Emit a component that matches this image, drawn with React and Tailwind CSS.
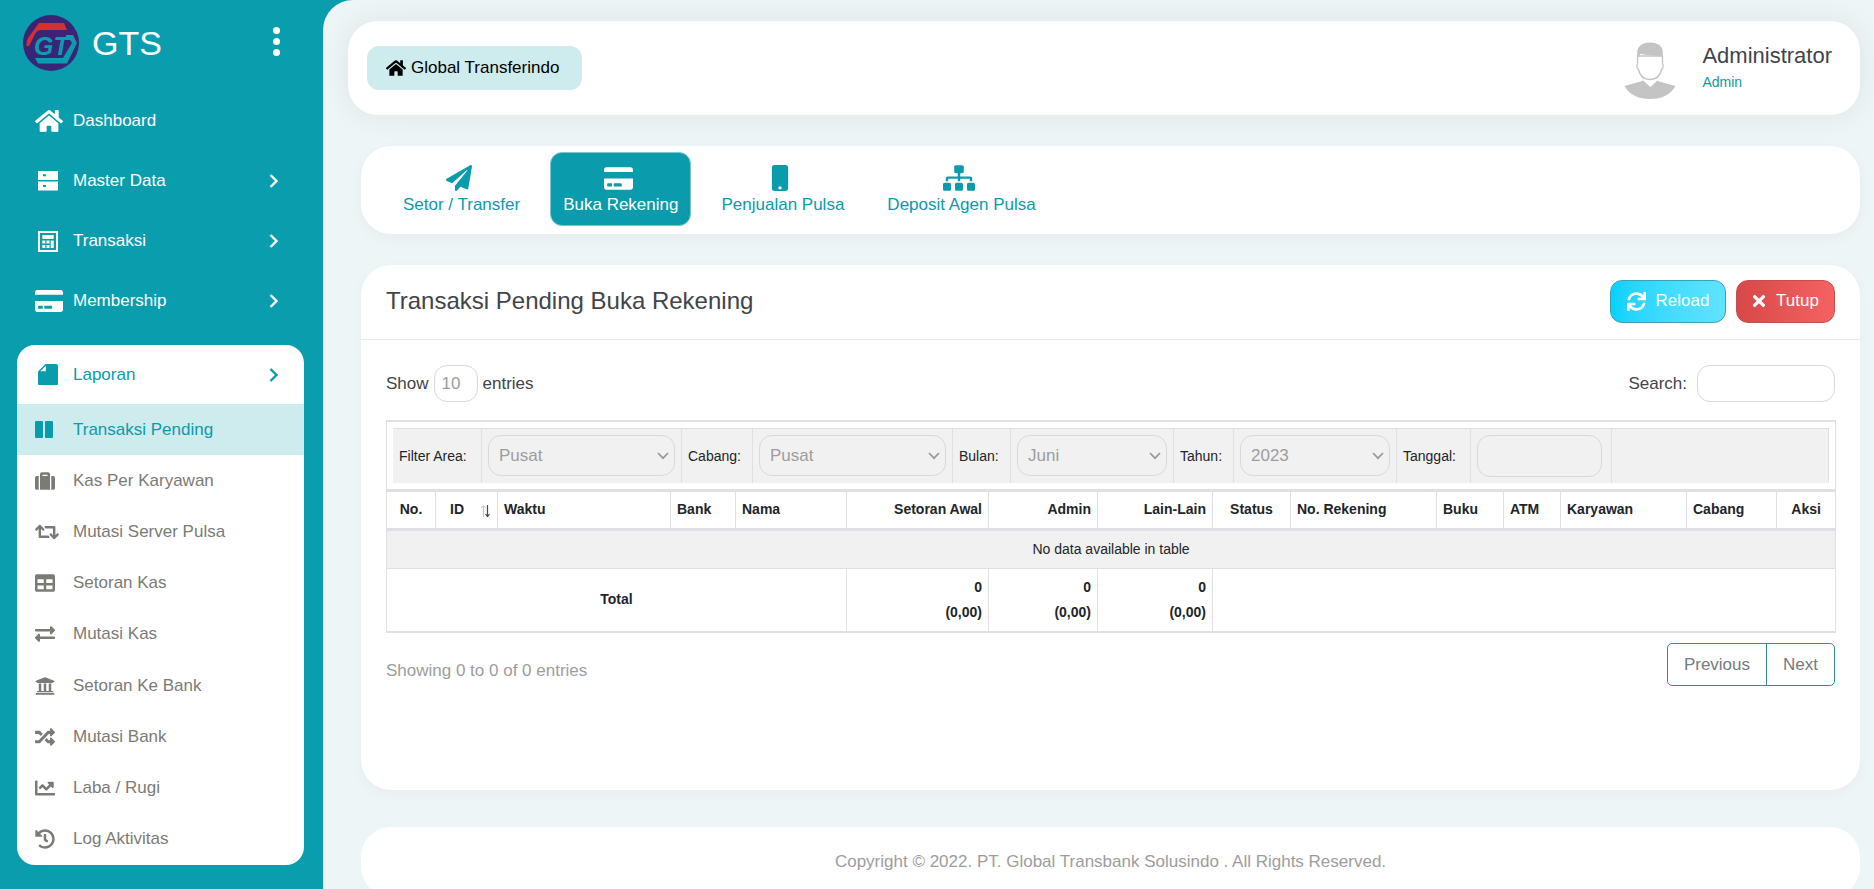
import React from "react";
import {
  FaHome, FaCreditCard, FaSuitcase, FaRetweet, FaTable, FaExchangeAlt, FaUniversity,
  FaRandom, FaChartLine, FaHistory, FaPaperPlane, FaMobile, FaSitemap, FaSync, FaTimes,
} from "react-icons/fa";

function Chevron({ className }) {
  return (
    <svg viewBox="0 0 10 16" className={className} fill="none" stroke="currentColor" strokeWidth="2.4" aria-hidden="true">
      <path d="M1.5 2 L7.5 8 L1.5 14" />
    </svg>
  );
}

function ServerIcon() {
  return (
    <svg viewBox="0 0 20 20" className="h-5 w-5" fill="currentColor" fillRule="evenodd" aria-hidden="true">
      <path d="M0 0H20V9H0Z M5 3.2V5.2H8V3.2Z" />
      <path d="M0 10.6H20V19.6H0Z M5 14V16H8V14Z" />
    </svg>
  );
}

function CalculatorIcon() {
  return (
    <svg viewBox="0 0 20 21" className="h-[21px] w-5" fill="currentColor" fillRule="evenodd" aria-hidden="true">
      <path d="M0 0H20V21H0Z M2 2V19H18V2Z" />
      <path d="M4.3 4H15.7V8H4.3Z" />
      <path d="M4.3 9.6H7.3V12.4H4.3Z M8.5 9.6H11.5V12.4H8.5Z M12.7 9.6H15.7V17H12.7Z M4.3 14H7.3V17H4.3Z M8.5 14H11.5V17H8.5Z" />
    </svg>
  );
}

function FileIcon() {
  return (
    <svg viewBox="0 0 20 21" className="h-[21px] w-5" fill="currentColor" aria-hidden="true">
      <path fillRule="evenodd" d="M7.5 0H18Q20 0 20 2V20Q20 21 19 21H1Q0 21 0 20V7.5Z M2.3 7.2H7.8V1.8Z" />
    </svg>
  );
}

function PauseIcon() {
  return (
    <svg viewBox="0 0 18 17" className="h-[17px] w-[18px]" fill="currentColor" aria-hidden="true">
      <rect x="0" y="0" width="8" height="17" rx="1" />
      <rect x="10" y="0" width="8" height="17" rx="1" />
    </svg>
  );
}

function Logo() {
  return (
    <svg viewBox="0 0 56 56" className="h-14 w-14" role="img" aria-label="GTS">
      <circle cx="28" cy="28" r="28" fill="#3a2477" />
      <path d="M16 8H41L44 15H19Q14 15 12 19L6 31H3.500Q3 27 5 23Z" fill="#d1322f" />
      <path d="M43 20H50L54 28L44 48.500H15L12 43H40L49 28L46 23H43Z" fill="#0a9dae" />
      <text x="11" y="40" fontFamily="Liberation Sans, sans-serif" fontWeight="bold" fontStyle="italic" fontSize="25" fill="#0a9dae">GT</text>
    </svg>
  );
}

function Avatar() {
  return (
    <svg viewBox="0 0 52 58" className="h-[58px] w-[52px]" role="img" aria-label="Administrator">
      <path d="M18.5 34V39L0.5 44Q8 57 26 57Q44 57 51.5 44L33.5 39V34Z" fill="#c4c4c4" />
      <path d="M18.5 33V38L26.500 45L34 38V33Z" fill="#fff" />
      <path d="M13.5 14V22Q12.500 22.500 13 25Q13.500 27 14.500 27.500Q16.500 37.500 26 37.500Q35.500 37.500 37.500 27.500Q38.500 27 39 25Q39.500 22.500 38.500 22V14Z" fill="#fff" stroke="#c4c4c4" strokeWidth="1.3" />
      <path d="M13.200 22V10Q13.500 5 17.500 2.500Q21 0.500 26 0.500Q31 0.500 34.500 2.500Q38.800 5 38.800 10V22L37.800 13.500Q32 14 26 13.300Q20 13 17 11.700L14.500 14Z" fill="#c4c4c4" />
    </svg>
  );
}

const mainMenu = [
  { label: "Dashboard", icon: <FaHome className="h-7 w-7" /> },
  { label: "Master Data", icon: <ServerIcon />, inset: true, more: true },
  { label: "Transaksi", icon: <CalculatorIcon />, inset: true, more: true },
  { label: "Membership", icon: <FaCreditCard className="h-7 w-7" />, more: true },
];

const reports = [
  { label: "Transaksi Pending", icon: <PauseIcon />, active: true },
  { label: "Kas Per Karyawan", icon: <FaSuitcase className="h-5 w-5" /> },
  { label: "Mutasi Server Pulsa", icon: <FaRetweet className="h-6 w-6" /> },
  { label: "Setoran Kas", icon: <FaTable className="h-5 w-5" /> },
  { label: "Mutasi Kas", icon: <FaExchangeAlt className="h-5 w-5" /> },
  { label: "Setoran Ke Bank", icon: <FaUniversity className="h-5 w-5" /> },
  { label: "Mutasi Bank", icon: <FaRandom className="h-5 w-5" /> },
  { label: "Laba / Rugi", icon: <FaChartLine className="h-5 w-5" /> },
  { label: "Log Aktivitas", icon: <FaHistory className="h-5 w-5" /> },
];

function Sidebar() {
  return (
    <aside className="flex w-[323px] shrink-0 flex-col text-white">
      <div className="flex h-[91px] items-start pt-[15px] pl-[23px] pr-[43px]">
        <Logo />
        <span className="ml-[13px] flex-1 text-[34px] leading-[56px]">GTS</span>
        <button type="button" aria-label="Menu" className="mt-3 flex flex-col gap-1">
          <span className="h-[7px] w-[7px] rounded-full bg-white" />
          <span className="h-[7px] w-[7px] rounded-full bg-white" />
          <span className="h-[7px] w-[7px] rounded-full bg-white" />
        </button>
      </div>
      <nav>
        {mainMenu.map((m) => (
          <a key={m.label} href="#" className="flex h-[60px] items-center pl-[35px] pr-11">
            <span className={m.inset ? "w-[38px] pl-[3px]" : "w-[38px]"}>{m.icon}</span>
            <span className="flex-1">{m.label}</span>
            {m.more && <Chevron className="h-4 w-[10px]" />}
          </a>
        ))}
        <div className="mx-[17px] mr-[19px] mt-[14px] overflow-hidden rounded-[18px] bg-white">
          <a href="#" className="flex h-[59px] items-center pl-[21px] pr-[25px] text-[#0a9bac]">
            <span className="w-[35px]"><FileIcon /></span>
            <span className="flex-1">Laporan</span>
            <Chevron className="h-4 w-[10px]" />
          </a>
          <ul className="grid h-[461px] auto-rows-fr">
            {reports.map((r) => (
              <li key={r.label} className="flex">
                <a
                  href="#"
                  className={
                    r.active
                      ? "flex flex-1 items-center bg-[#ceebed] pl-[18px] text-[#0a9bac]"
                      : "flex flex-1 items-center pl-[18px] text-[#7b7b76]"
                  }
                >
                  <span className="w-[38px]">{r.icon}</span>
                  {r.label}
                </a>
              </li>
            ))}
          </ul>
        </div>
      </nav>
    </aside>
  );
}

const tabs = [
  { label: "Setor / Transfer", icon: <FaPaperPlane className="h-[26px] w-[26px]" /> },
  { label: "Buka Rekening", icon: <FaCreditCard className="h-[29px] w-[29px]" />, active: true },
  { label: "Penjualan Pulsa", icon: <FaMobile className="h-[26px] w-[26px]" /> },
  { label: "Deposit Agen Pulsa", icon: <FaSitemap className="h-8 w-8" /> },
];

function FilterLabel({ htmlFor, className, children }) {
  return (
    <label htmlFor={htmlFor} className={`flex shrink-0 items-center border-r border-[#dee0e3] pl-[6px] ${className}`}>
      {children}
    </label>
  );
}

function FilterSelect({ id, value, className }) {
  return (
    <div className="shrink-0 border-r border-[#dee0e3] p-[6px]">
      <div className="relative">
        <select
          id={id}
          className={`h-[41px] appearance-none rounded-[13px] border border-[#d9d9db] bg-transparent pl-[10px] text-[17px] text-[#9d9d9d] ${className}`}
        >
          <option>{value}</option>
        </select>
        <svg viewBox="0 0 12 8" className="pointer-events-none absolute right-[6px] top-[17px] h-2 w-3" fill="none" stroke="#999" strokeWidth="1.7" aria-hidden="true">
          <path d="M1 1 L6 6.200 L11 1" />
        </svg>
      </div>
    </div>
  );
}

const columns = [
  { label: "No.", w: "w-[49px]", a: "text-center" },
  { label: "ID", w: "w-[62px]", a: "text-left", sort: true },
  { label: "Waktu", w: "w-[173px]", a: "text-left" },
  { label: "Bank", w: "w-[65px]", a: "text-left" },
  { label: "Nama", w: "w-[111px]", a: "text-left" },
  { label: "Setoran Awal", w: "w-[142px]", a: "text-right" },
  { label: "Admin", w: "w-[109px]", a: "text-right" },
  { label: "Lain-Lain", w: "w-[115px]", a: "text-right" },
  { label: "Status", w: "w-[78px]", a: "text-center" },
  { label: "No. Rekening", w: "w-[146px]", a: "text-left" },
  { label: "Buku", w: "w-[67px]", a: "text-left" },
  { label: "ATM", w: "w-[57px]", a: "text-left" },
  { label: "Karyawan", w: "w-[126px]", a: "text-left" },
  { label: "Cabang", w: "w-[90px]", a: "text-left" },
  { label: "Aksi", w: "w-[58px]", a: "text-center" },
];

function DataTable() {
  return (
    <table className="mt-[18px] w-full table-fixed border-separate border-spacing-0 border-x border-b-2 border-t-2 border-[#dee0e3] text-[14px] text-[#212529]">
      <colgroup>
        {columns.map((c) => (
          <col key={c.label} className={c.w} />
        ))}
      </colgroup>
      <thead>
        <tr>
          <td colSpan={15} className="p-[6px]">
            <div className="flex h-[55px] border-r border-t border-[#dee0e3] bg-[#f1f1f1]">
              <FilterLabel htmlFor="area" className="w-[89px]">Filter Area:</FilterLabel>
              <FilterSelect id="area" value="Pusat" className="w-[187px]" />
              <FilterLabel htmlFor="cabang" className="w-[71px]">Cabang:</FilterLabel>
              <FilterSelect id="cabang" value="Pusat" className="w-[187px]" />
              <FilterLabel htmlFor="bulan" className="w-[58px]">Bulan:</FilterLabel>
              <FilterSelect id="bulan" value="Juni" className="w-[150px]" />
              <FilterLabel htmlFor="tahun" className="w-[60px]">Tahun:</FilterLabel>
              <FilterSelect id="tahun" value="2023" className="w-[150px]" />
              <FilterLabel htmlFor="tanggal" className="w-[74px]">Tanggal:</FilterLabel>
              <div className="shrink-0 border-r border-[#dee0e3] py-[6px] pl-[6px] pr-[9px]">
                <input id="tanggal" type="text" className="h-[42px] w-[125px] rounded-[13px] border border-[#d9d9db] bg-transparent px-[10px] text-[17px] text-[#9d9d9d]" />
              </div>
            </div>
          </td>
        </tr>
        <tr>
          {columns.map((c, i) => (
            <th
              key={c.label}
              className={`h-[42px] whitespace-nowrap border-b-[3px] border-t-[3px] border-[#dee0e3] px-[6px] pb-[2px] font-bold ${c.a} ${i < 14 ? "border-r" : ""}`}
            >
              {c.sort ? (
                <span className="flex items-center justify-between pl-2">
                  {c.label}
                  <svg viewBox="0 0 10 14" className="mt-1 h-[14px] w-[10px]" fill="none" aria-hidden="true">
                    <path d="M2.500 13V2M0.500 4L2.500 1.500L4.500 4" stroke="#c3c3c5" />
                    <path d="M6.500 1V12M4.500 10L6.500 12.500L8.500 10" stroke="#45474b" strokeWidth="1.200" />
                  </svg>
                </span>
              ) : (
                c.label
              )}
            </th>
          ))}
        </tr>
      </thead>
      <tbody>
        <tr>
          <td colSpan={15} className="h-[38px] border-b border-[#dee0e3] bg-[#f1f1f1] pb-[2px] text-center">
            No data available in table
          </td>
        </tr>
      </tbody>
      <tfoot>
        <tr className="font-bold">
          <th colSpan={5} className="h-[62px] border-r border-[#dee0e3] pb-[2px] text-center">Total</th>
          {["awal", "admin", "lain"].map((k) => (
            <td key={k} className="border-r border-[#dee0e3] px-[6px] text-right leading-[25px]">
              0<br />(0,00)
            </td>
          ))}
          <td colSpan={7} />
        </tr>
      </tfoot>
    </table>
  );
}

export default function App() {
  return (
    <div className="flex h-screen overflow-hidden bg-[#0a9dae] font-['Liberation_Sans',Arial,sans-serif] text-[17px] leading-6">
      <Sidebar />
      <main className="min-w-0 flex-1 overflow-y-auto rounded-tl-[30px] bg-[#edf5f7] pb-6 pl-[25px] pr-[14px] pt-[21px] [scrollbar-width:none]">
        <header className="flex h-[94px] items-center justify-between rounded-[30px] bg-white pl-[19px] pr-7 shadow-[0_0_30px_rgba(0,0,0,0.07)]">
          <a href="#" className="flex h-11 items-center gap-[5px] rounded-xl bg-[#ceebed] pl-[19px] pr-[23px] text-black">
            <FaHome className="h-5 w-5" />
            Global Transferindo
          </a>
          <div className="flex items-start">
            <div className="pt-[5px]"><Avatar /></div>
            <div className="ml-[26px] pt-[6px]">
              <div className="text-[22px] leading-[26px] text-[#41444b]">Administrator</div>
              <div className="pt-[3px] text-[14px] leading-5 text-[#0a9b9e]">Admin</div>
            </div>
          </div>
        </header>

        <div className="ml-[13px] mt-[31px]">
          <nav className="flex h-[88px] items-start gap-[17px] rounded-[30px] bg-white pl-[29px] pt-[6px] shadow-[0_4px_14px_rgba(0,0,0,0.04)]">
            {tabs.map((t) => (
              <a
                key={t.label}
                href="#"
                className={
                  t.active
                    ? "flex h-[74px] flex-col items-center rounded-xl border border-[#7cc6ce] bg-[#0a9bac] px-3 text-white"
                    : "flex h-[74px] flex-col items-center rounded-xl border border-transparent px-3 text-[#0a9bac]"
                }
              >
                <span className="mr-[5px] mt-[9px] flex h-8 items-center">{t.icon}</span>
                <span className="leading-[22px]">{t.label}</span>
              </a>
            ))}
          </nav>

          <section className="mt-[31px] min-h-[525px] rounded-[30px] bg-white shadow-[0_4px_14px_rgba(0,0,0,0.03)]">
            <div className="flex h-[75px] items-center justify-between border-b border-[#e6e8ea] px-[25px] pb-[2px]">
              <h1 className="text-[24px] leading-8 text-[#41444b]">Transaksi Pending Buka Rekening</h1>
              <div className="flex gap-[10px]">
                <button type="button" className="flex h-[43px] w-[116px] items-center justify-center gap-[10px] rounded-xl border border-[#3aa3b0] bg-linear-to-r from-[#00d2ff] to-[#5fe4ff] text-white">
                  <FaSync className="h-[19px] w-[19px]" />
                  Reload
                </button>
                <button type="button" className="flex h-[43px] w-[99px] items-center justify-center gap-[10px] rounded-xl border border-[#c25053] bg-linear-to-r from-[#d94848] to-[#f46262] text-white">
                  <FaTimes className="h-[18px] w-[14px]" />
                  Tutup
                </button>
              </div>
            </div>
            <div className="px-[25px] pt-[25px]">
              <div className="flex items-center justify-between text-[#41444b]">
                <div className="flex items-center gap-[5px]">
                  <label htmlFor="length">Show</label>
                  <select id="length" className="h-[37px] w-11 appearance-none rounded-[13px] border border-[#d9d9db] bg-white pl-[7px] text-[#9d9d9d]">
                    <option>10</option>
                  </select>
                  <span>entries</span>
                </div>
                <div className="flex items-center gap-[10px]">
                  <label htmlFor="search">Search:</label>
                  <input id="search" type="search" className="h-[37px] w-[138px] rounded-[13px] border border-[#d9d9db] bg-white px-[10px]" />
                </div>
              </div>
              <DataTable />
              <div className="mt-[10px] flex items-start justify-between">
                <p className="pt-4 text-[#9d9d9d]">Showing 0 to 0 of 0 entries</p>
                <div className="flex h-[43px] overflow-hidden rounded-[5px] border border-[#2f8f92] text-[#767b80]">
                  <button type="button" className="border-r border-[#2f8f92] px-4">Previous</button>
                  <button type="button" className="px-4">Next</button>
                </div>
              </div>
            </div>
          </section>

          <footer className="mt-[37px] h-[70px] rounded-[30px] bg-white text-center leading-[70px] text-[#9d9d9d]">
            Copyright © 2022. PT. Global Transbank Solusindo . All Rights Reserved.
          </footer>
        </div>
      </main>
    </div>
  );
}
